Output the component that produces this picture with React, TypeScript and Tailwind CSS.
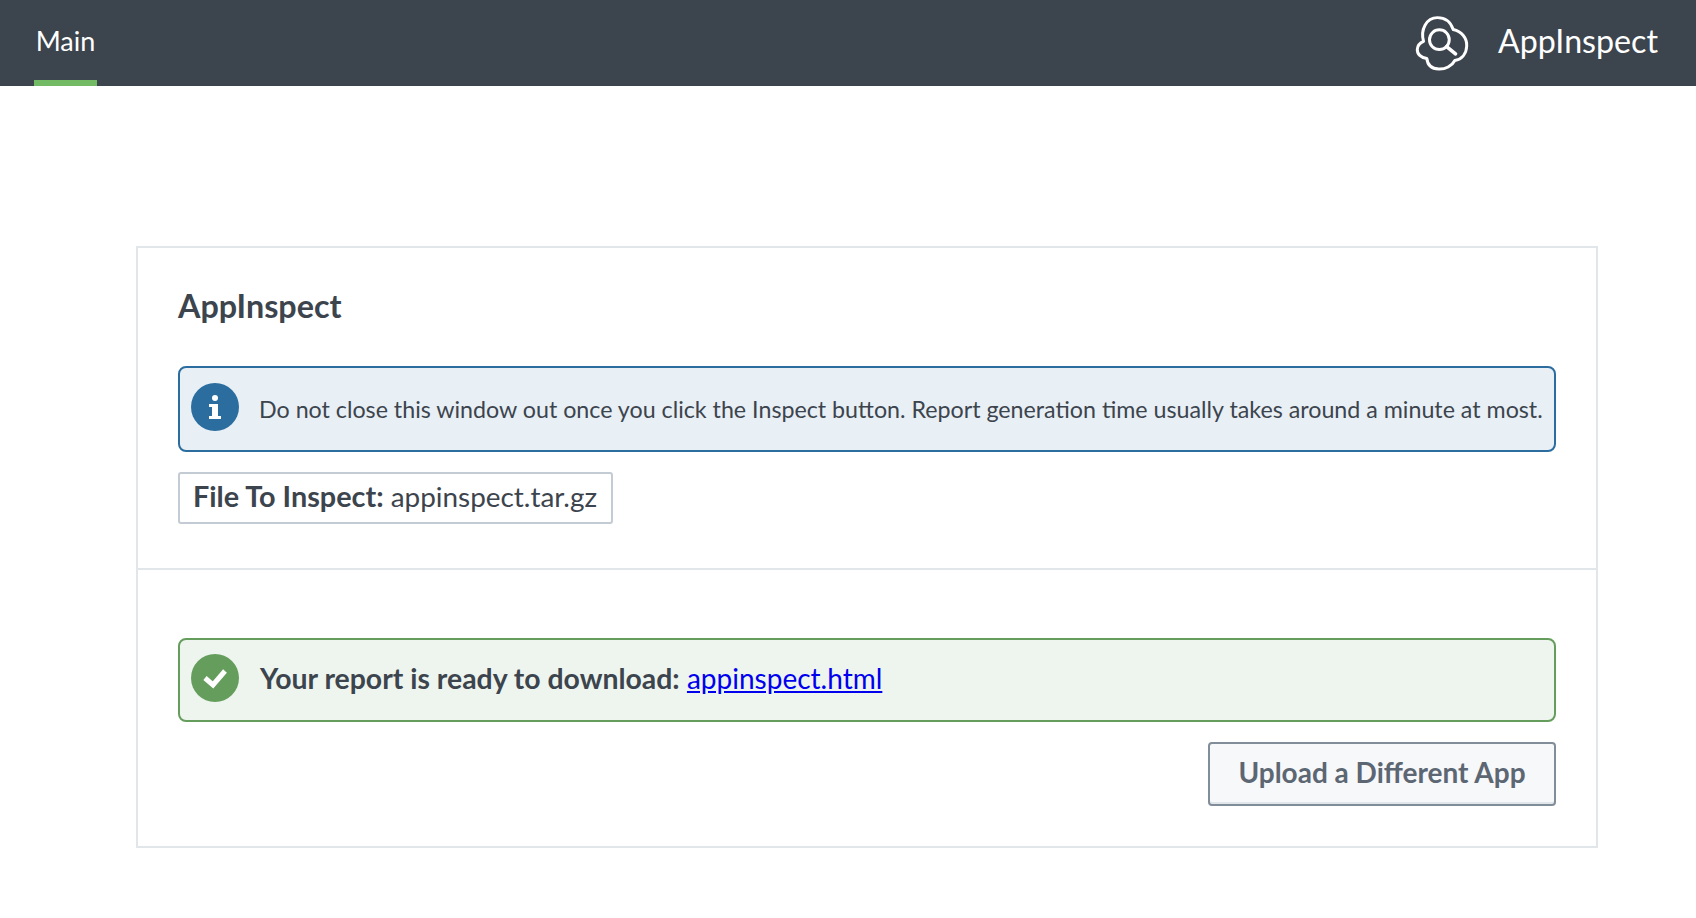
const font = { fontFamily: "Lato, 'Open Sans', sans-serif" };

function CloudLogo() {
  return (
    <svg width="54" height="56" viewBox="225 40 162 170" fill="none" stroke="#fff" strokeWidth="9" strokeLinecap="round" strokeLinejoin="round">
      <path d="M250 120C240 85 258 48 292 48C316 48 332 60 340 84C366 90 382 110 381 134C380 158 366 174 345 178C336 195 316 205 296 204C276 203 262 192 260 172C242 170 230 158 231 144C232 132 240 124 250 120Z" />
      <circle cx="298" cy="115" r="30" />
      <path d="M320 136L347 158" strokeWidth="11" />
    </svg>
  );
}

function InfoIcon() {
  return (
    <svg width="48" height="48" viewBox="0 0 48 48" className="shrink-0">
      <circle cx="24" cy="24" r="24" fill="#2a6d9e" />
      <circle cx="24" cy="15" r="3" fill="#fff" />
      <path d="M18 21h9v12h3v3H18v-3h3v-9h-3z" fill="#fff" />
    </svg>
  );
}

function CheckIcon() {
  return (
    <svg width="48" height="48" viewBox="0 0 48 48" className="shrink-0">
      <circle cx="24" cy="24" r="24" fill="#659e5c" />
      <path d="M14 24l8 7 12-14" fill="none" stroke="#fff" strokeWidth="5" />
    </svg>
  );
}

export default function App() {
  return (
    <div className="min-h-[918px] bg-white text-[#3c444d]" style={font}>
      <header className="flex h-[86px] items-start justify-between bg-[#3c444d] text-white">
        <div className="ml-[34px] flex h-[86px] w-[63px] items-center justify-center border-b-[6px] border-[#72bb64] pt-[2px] text-[27px]">
          Main
        </div>
        <div className="mr-[38px] flex h-[86px] items-center gap-[29px] text-[32.2px]">
          <CloudLogo />
          <span className="pb-[4px]">AppInspect</span>
        </div>
      </header>

      <main className="pl-[136px] pr-[98px] pt-[160px]">
        <section className="h-[602px] border-2 border-[#e1e6eb]">
          <div className="h-[322px] border-b-2 border-[#e1e6eb] px-[40px] pt-[38px]">
            <h1 className="text-[32.3px] font-bold leading-[40px]">AppInspect</h1>
            <div className="mt-[40px] flex h-[86px] items-center gap-[20px] rounded-[8px] border-2 border-[#2a6d9e] bg-[#e8eff5] pb-[4px] pl-[11px] text-[23.24px]">
              <InfoIcon />
              <span className="whitespace-nowrap pt-[4px]">Do not close this window out once you click the Inspect button. Report generation time usually takes around a minute at most.</span>
            </div>
            <div className="mt-[20px] flex h-[52px] w-[435px] items-center rounded-[3px] border-2 border-[#c3cbd4] pb-[2px] pl-[13px] text-[27.9px]">
              <span><b className="text-[28.8px]">File To Inspect:</b> appinspect.tar.gz</span>
            </div>
          </div>
          <div className="px-[40px] pt-[68px]">
            <div className="flex h-[84px] items-center gap-[21px] rounded-[8px] border-2 border-[#659e5c] bg-[#eef5ef] pb-[4px] pl-[11px] text-[28.4px]">
              <CheckIcon />
              <span>
                <b>Your report is ready to download:</b>{" "}
                <a href="#" className="text-[28px] text-[#0000ee] underline">appinspect.html</a>
              </span>
            </div>
            <div className="mt-[20px] flex justify-end">
              <button className="h-[64px] w-[348px] rounded-[4px] border-2 border-[#818d99] bg-[#f7f8fa] pb-[4px] text-[28px] font-bold text-[#5c6773] shadow-[inset_0_-2px_0_#e1e6eb]">
                Upload a Different App
              </button>
            </div>
          </div>
        </section>
      </main>
    </div>
  );
}
